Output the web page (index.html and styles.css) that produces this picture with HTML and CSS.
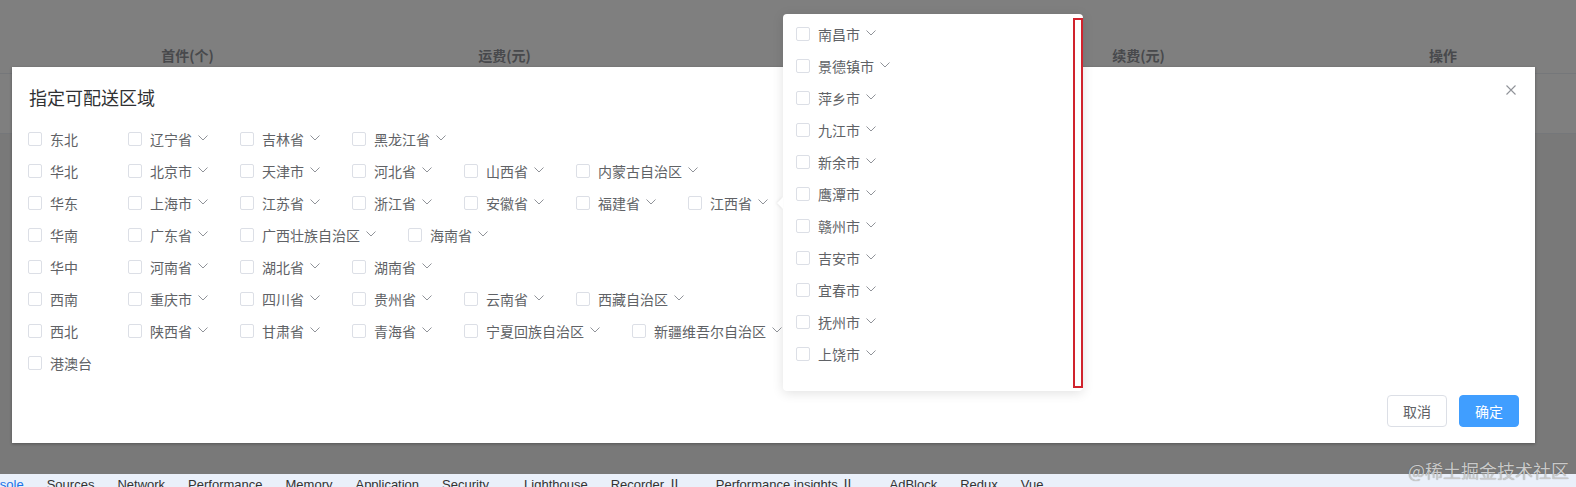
FILE: index.html
```html
<!DOCTYPE html>
<html lang="zh-CN">
<head>
<meta charset="utf-8">
<title>指定可配送区域</title>
<link rel="stylesheet" href="styles.css">
</head>
<body>
<div class="viewport">
  <div class="page">
    <div class="table">
      <div class="thead">
        <div class="th">首件(个)</div>
        <div class="th">运费(元)</div>
        <div class="th"></div>
        <div class="th">续费(元)</div>
        <div class="th">操作</div>
      </div>
      <div class="trow"></div>
    </div>
  </div>
  <div class="mask"></div>

  <div class="dialog">
    <div class="dialog-header">
      <div class="dialog-title">指定可配送区域</div>
      <svg class="close" viewBox="0 0 10 10"><path d="M0.5 0.5L9.5 9.5M9.5 0.5L0.5 9.5"/></svg>
    </div>
    <div class="dialog-body">
      <div class="row">
        <div class="region"><span class="checkbox"></span><span class="label">东北</span></div>
        <div class="item"><span class="checkbox"></span><span class="label">辽宁省</span><svg class="chev" viewBox="0 0 10 6"><path d="M0.5 0.5L5 5L9.5 0.5"/></svg></div>
        <div class="item"><span class="checkbox"></span><span class="label">吉林省</span><svg class="chev" viewBox="0 0 10 6"><path d="M0.5 0.5L5 5L9.5 0.5"/></svg></div>
        <div class="item"><span class="checkbox"></span><span class="label">黑龙江省</span><svg class="chev" viewBox="0 0 10 6"><path d="M0.5 0.5L5 5L9.5 0.5"/></svg></div>
      </div>
      <div class="row">
        <div class="region"><span class="checkbox"></span><span class="label">华北</span></div>
        <div class="item"><span class="checkbox"></span><span class="label">北京市</span><svg class="chev" viewBox="0 0 10 6"><path d="M0.5 0.5L5 5L9.5 0.5"/></svg></div>
        <div class="item"><span class="checkbox"></span><span class="label">天津市</span><svg class="chev" viewBox="0 0 10 6"><path d="M0.5 0.5L5 5L9.5 0.5"/></svg></div>
        <div class="item"><span class="checkbox"></span><span class="label">河北省</span><svg class="chev" viewBox="0 0 10 6"><path d="M0.5 0.5L5 5L9.5 0.5"/></svg></div>
        <div class="item"><span class="checkbox"></span><span class="label">山西省</span><svg class="chev" viewBox="0 0 10 6"><path d="M0.5 0.5L5 5L9.5 0.5"/></svg></div>
        <div class="item"><span class="checkbox"></span><span class="label">内蒙古自治区</span><svg class="chev" viewBox="0 0 10 6"><path d="M0.5 0.5L5 5L9.5 0.5"/></svg></div>
      </div>
      <div class="row">
        <div class="region"><span class="checkbox"></span><span class="label">华东</span></div>
        <div class="item"><span class="checkbox"></span><span class="label">上海市</span><svg class="chev" viewBox="0 0 10 6"><path d="M0.5 0.5L5 5L9.5 0.5"/></svg></div>
        <div class="item"><span class="checkbox"></span><span class="label">江苏省</span><svg class="chev" viewBox="0 0 10 6"><path d="M0.5 0.5L5 5L9.5 0.5"/></svg></div>
        <div class="item"><span class="checkbox"></span><span class="label">浙江省</span><svg class="chev" viewBox="0 0 10 6"><path d="M0.5 0.5L5 5L9.5 0.5"/></svg></div>
        <div class="item"><span class="checkbox"></span><span class="label">安徽省</span><svg class="chev" viewBox="0 0 10 6"><path d="M0.5 0.5L5 5L9.5 0.5"/></svg></div>
        <div class="item"><span class="checkbox"></span><span class="label">福建省</span><svg class="chev" viewBox="0 0 10 6"><path d="M0.5 0.5L5 5L9.5 0.5"/></svg></div>
        <div class="item"><span class="checkbox"></span><span class="label">江西省</span><svg class="chev" viewBox="0 0 10 6"><path d="M0.5 0.5L5 5L9.5 0.5"/></svg></div>
      </div>
      <div class="row">
        <div class="region"><span class="checkbox"></span><span class="label">华南</span></div>
        <div class="item"><span class="checkbox"></span><span class="label">广东省</span><svg class="chev" viewBox="0 0 10 6"><path d="M0.5 0.5L5 5L9.5 0.5"/></svg></div>
        <div class="item"><span class="checkbox"></span><span class="label">广西壮族自治区</span><svg class="chev" viewBox="0 0 10 6"><path d="M0.5 0.5L5 5L9.5 0.5"/></svg></div>
        <div class="item"><span class="checkbox"></span><span class="label">海南省</span><svg class="chev" viewBox="0 0 10 6"><path d="M0.5 0.5L5 5L9.5 0.5"/></svg></div>
      </div>
      <div class="row">
        <div class="region"><span class="checkbox"></span><span class="label">华中</span></div>
        <div class="item"><span class="checkbox"></span><span class="label">河南省</span><svg class="chev" viewBox="0 0 10 6"><path d="M0.5 0.5L5 5L9.5 0.5"/></svg></div>
        <div class="item"><span class="checkbox"></span><span class="label">湖北省</span><svg class="chev" viewBox="0 0 10 6"><path d="M0.5 0.5L5 5L9.5 0.5"/></svg></div>
        <div class="item"><span class="checkbox"></span><span class="label">湖南省</span><svg class="chev" viewBox="0 0 10 6"><path d="M0.5 0.5L5 5L9.5 0.5"/></svg></div>
      </div>
      <div class="row">
        <div class="region"><span class="checkbox"></span><span class="label">西南</span></div>
        <div class="item"><span class="checkbox"></span><span class="label">重庆市</span><svg class="chev" viewBox="0 0 10 6"><path d="M0.5 0.5L5 5L9.5 0.5"/></svg></div>
        <div class="item"><span class="checkbox"></span><span class="label">四川省</span><svg class="chev" viewBox="0 0 10 6"><path d="M0.5 0.5L5 5L9.5 0.5"/></svg></div>
        <div class="item"><span class="checkbox"></span><span class="label">贵州省</span><svg class="chev" viewBox="0 0 10 6"><path d="M0.5 0.5L5 5L9.5 0.5"/></svg></div>
        <div class="item"><span class="checkbox"></span><span class="label">云南省</span><svg class="chev" viewBox="0 0 10 6"><path d="M0.5 0.5L5 5L9.5 0.5"/></svg></div>
        <div class="item"><span class="checkbox"></span><span class="label">西藏自治区</span><svg class="chev" viewBox="0 0 10 6"><path d="M0.5 0.5L5 5L9.5 0.5"/></svg></div>
      </div>
      <div class="row">
        <div class="region"><span class="checkbox"></span><span class="label">西北</span></div>
        <div class="item"><span class="checkbox"></span><span class="label">陕西省</span><svg class="chev" viewBox="0 0 10 6"><path d="M0.5 0.5L5 5L9.5 0.5"/></svg></div>
        <div class="item"><span class="checkbox"></span><span class="label">甘肃省</span><svg class="chev" viewBox="0 0 10 6"><path d="M0.5 0.5L5 5L9.5 0.5"/></svg></div>
        <div class="item"><span class="checkbox"></span><span class="label">青海省</span><svg class="chev" viewBox="0 0 10 6"><path d="M0.5 0.5L5 5L9.5 0.5"/></svg></div>
        <div class="item"><span class="checkbox"></span><span class="label">宁夏回族自治区</span><svg class="chev" viewBox="0 0 10 6"><path d="M0.5 0.5L5 5L9.5 0.5"/></svg></div>
        <div class="item"><span class="checkbox"></span><span class="label">新疆维吾尔自治区</span><svg class="chev" viewBox="0 0 10 6"><path d="M0.5 0.5L5 5L9.5 0.5"/></svg></div>
      </div>
      <div class="row">
        <div class="region"><span class="checkbox"></span><span class="label">港澳台</span></div>
      </div>
    </div>
    <div class="dialog-footer">
      <div class="btn">取消</div>
      <div class="btn btn-primary">确定</div>
    </div>
  </div>

  <div class="popover">
    <div class="pop-list">
      <div class="row"><div class="item"><span class="checkbox"></span><span class="label">南昌市</span><svg class="chev" viewBox="0 0 10 6"><path d="M0.5 0.5L5 5L9.5 0.5"/></svg></div></div>
      <div class="row"><div class="item"><span class="checkbox"></span><span class="label">景德镇市</span><svg class="chev" viewBox="0 0 10 6"><path d="M0.5 0.5L5 5L9.5 0.5"/></svg></div></div>
      <div class="row"><div class="item"><span class="checkbox"></span><span class="label">萍乡市</span><svg class="chev" viewBox="0 0 10 6"><path d="M0.5 0.5L5 5L9.5 0.5"/></svg></div></div>
      <div class="row"><div class="item"><span class="checkbox"></span><span class="label">九江市</span><svg class="chev" viewBox="0 0 10 6"><path d="M0.5 0.5L5 5L9.5 0.5"/></svg></div></div>
      <div class="row"><div class="item"><span class="checkbox"></span><span class="label">新余市</span><svg class="chev" viewBox="0 0 10 6"><path d="M0.5 0.5L5 5L9.5 0.5"/></svg></div></div>
      <div class="row"><div class="item"><span class="checkbox"></span><span class="label">鹰潭市</span><svg class="chev" viewBox="0 0 10 6"><path d="M0.5 0.5L5 5L9.5 0.5"/></svg></div></div>
      <div class="row"><div class="item"><span class="checkbox"></span><span class="label">赣州市</span><svg class="chev" viewBox="0 0 10 6"><path d="M0.5 0.5L5 5L9.5 0.5"/></svg></div></div>
      <div class="row"><div class="item"><span class="checkbox"></span><span class="label">吉安市</span><svg class="chev" viewBox="0 0 10 6"><path d="M0.5 0.5L5 5L9.5 0.5"/></svg></div></div>
      <div class="row"><div class="item"><span class="checkbox"></span><span class="label">宜春市</span><svg class="chev" viewBox="0 0 10 6"><path d="M0.5 0.5L5 5L9.5 0.5"/></svg></div></div>
      <div class="row"><div class="item"><span class="checkbox"></span><span class="label">抚州市</span><svg class="chev" viewBox="0 0 10 6"><path d="M0.5 0.5L5 5L9.5 0.5"/></svg></div></div>
      <div class="row"><div class="item"><span class="checkbox"></span><span class="label">上饶市</span><svg class="chev" viewBox="0 0 10 6"><path d="M0.5 0.5L5 5L9.5 0.5"/></svg></div></div>
    </div>
    <div class="scroll-mark"></div>
  </div>
</div>

<div class="devtools">
  <span class="tab active">Console</span>
  <span class="tab">Sources</span>
  <span class="tab">Network</span>
  <span class="tab">Performance</span>
  <span class="tab">Memory</span>
  <span class="tab">Application</span>
  <span class="tab">Security</span>
  <span class="tab wide">Lighthouse</span>
  <span class="tab">Recorder Ⅱ</span>
  <span class="tab wide">Performance insights Ⅱ</span>
  <span class="tab wide">AdBlock</span>
  <span class="tab">Redux</span>
  <span class="tab">Vue</span>
</div>

<div class="watermark">@稀土掘金技术社区</div>
</body>
</html>
```

FILE: styles.css
```css
html, body {
  margin: 0;
  padding: 0;
}

body {
  width: 1576px;
  height: 487px;
  overflow: hidden;
  position: relative;
  display: flex;
  flex-direction: column;
  font-family: "Noto Sans CJK SC", "Noto Sans", sans-serif;
}

.viewport {
  position: relative;
  height: 474px;
  flex: none;
  overflow: hidden;
}

.page {
  height: 100%;
  background: #f3f3f3;
}

.table {
  background: #fff;
  padding-top: 36px;
  overflow: hidden;
}

.thead {
  display: grid;
  grid-template-columns: 317px 317px 317px 317px 292px;
  padding-left: 29px;
  height: 37px;
  align-items: center;
  border-bottom: 1px solid #ebeef5;
}

.th {
  text-align: center;
  font-size: 14px;
  font-weight: bold;
  color: #909399;
}

.trow {
  height: 59px;
  border-bottom: 1px solid #ebeef5;
}

.mask {
  position: absolute;
  inset: 0;
  background: rgba(0, 0, 0, 0.5);
}

.dialog {
  position: absolute;
  left: 12px;
  top: 67px;
  width: 1523px;
  height: 376px;
  box-sizing: border-box;
  padding: 0 16px 16px;
  background: #fff;
  display: flex;
  flex-direction: column;
  box-shadow: 0 1px 3px rgba(0, 0, 0, 0.3);
}

.dialog-header {
  display: flex;
  justify-content: space-between;
  align-items: flex-start;
  padding: 18px 0 14px 1px;
}

.dialog-title {
  font-size: 18px;
  line-height: 24px;
  color: #303133;
}

.close {
  width: 10px;
  height: 10px;
  margin-right: 3px;
  margin-top: 0;
  fill: none;
  stroke: #909399;
  stroke-width: 1.1;
}

.dialog-body {
  flex: 1;
}

.row {
  display: flex;
  align-items: center;
  height: 32px;
}

.region {
  width: 100px;
  flex: none;
  display: flex;
  align-items: center;
}

.item {
  display: flex;
  align-items: center;
  margin-right: 32px;
  flex: none;
}

.checkbox {
  width: 14px;
  height: 14px;
  box-sizing: border-box;
  border: 1px solid #dcdfe6;
  border-radius: 2px;
  background: #fff;
  margin-right: 8px;
  flex: none;
}

.label {
  font-size: 14px;
  line-height: 20px;
  color: #606266;
  white-space: nowrap;
}

.chev {
  width: 10px;
  height: 6px;
  margin-left: 6px;
  margin-top: -3px;
  fill: none;
  stroke: #909399;
  stroke-width: 1;
}

.dialog-footer {
  display: flex;
  justify-content: flex-end;
  gap: 12px;
  margin-top: 16px;
}

.btn {
  width: 60px;
  height: 32px;
  box-sizing: border-box;
  border: 1px solid #dcdfe6;
  border-radius: 4px;
  background: #fff;
  color: #606266;
  font-size: 14px;
  display: flex;
  align-items: center;
  justify-content: center;
}

.btn-primary {
  background: #409eff;
  border-color: #409eff;
  color: #fff;
}

.popover {
  position: absolute;
  left: 783px;
  top: 14px;
  width: 300px;
  height: 377px;
  box-sizing: border-box;
  padding: 4px 0 3px 13px;
  background: #fff;
  border-radius: 4px;
  box-shadow: 0 2px 12px rgba(0, 0, 0, 0.12);
  display: flex;
}

.popover::before {
  content: "";
  position: absolute;
  left: -6px;
  top: 183px;
  width: 0;
  height: 0;
  border-top: 6px solid transparent;
  border-bottom: 6px solid transparent;
  border-right: 6px solid #fff;
  filter: drop-shadow(-1px 0 1px rgba(0, 0, 0, 0.08));
}

.pop-list {
  flex: 1;
}

.scroll-mark {
  width: 10px;
  flex: none;
  box-sizing: border-box;
  border: 2px solid #d0232d;
}

.devtools {
  flex: none;
  height: 13px;
  box-sizing: border-box;
  padding-top: 3px;
  background: #eaf0fa;
  display: flex;
  gap: 23px;
  overflow: visible;
  white-space: nowrap;
  font-family: "Liberation Sans", Arial, sans-serif;
  font-size: 13px;
  line-height: 16px;
  color: #333;
}

.tab.active {
  color: #1a73e8;
  margin-left: -24px;
}

.tab.wide {
  margin-left: 12px;
}

.watermark {
  position: absolute;
  right: 7px;
  top: 457px;
  font-size: 18px;
  line-height: 26px;
  color: #cacaca;
  text-shadow: 0 0 1px rgba(0, 0, 0, 0.35);
  white-space: nowrap;
}
```
